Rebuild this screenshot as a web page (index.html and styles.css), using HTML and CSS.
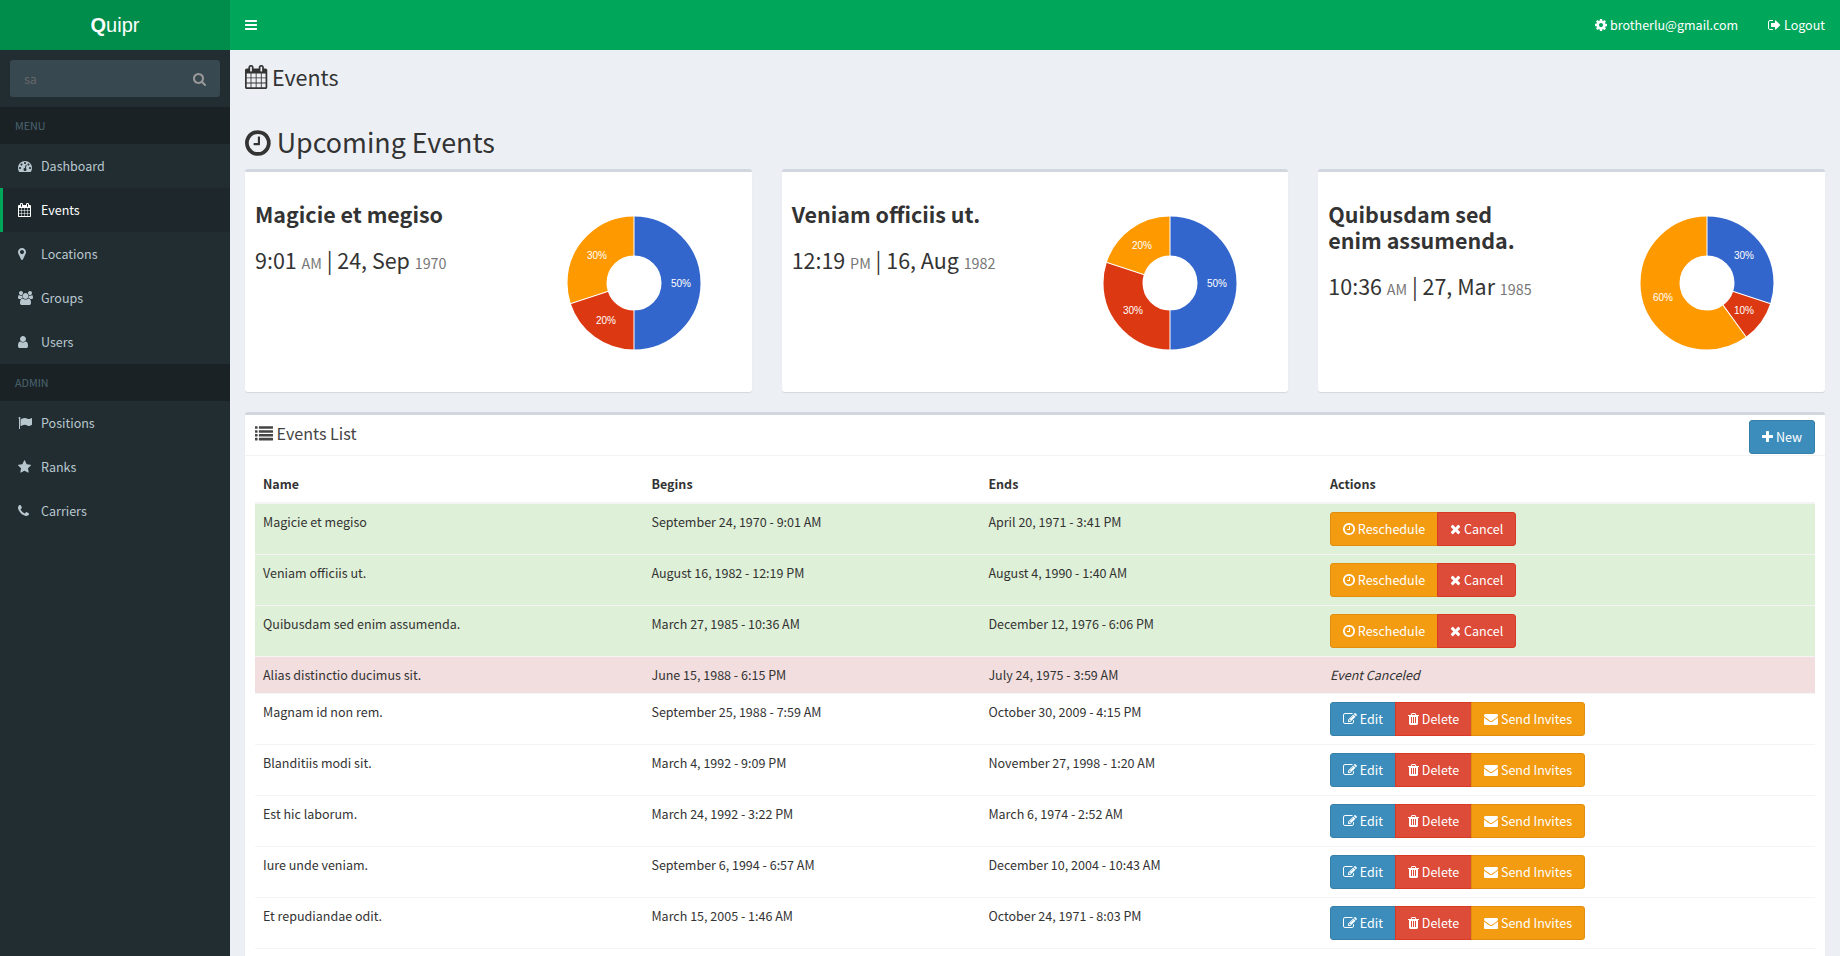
FILE: index.html
```html
<!DOCTYPE html>
<html lang="en">
<head>
<meta charset="utf-8">
<title>Quipr</title>
<link rel="stylesheet" href="styles.css">
</head>
<body>
<svg class="sprite" aria-hidden="true">
  <defs>
    <path id="i-bars" d="M1664 1344v128q0 26-19 45t-45 19h-1408q-26 0-45-19t-19-45v-128q0-26 19-45t45-19h1408q26 0 45 19t19 45zm0-512v128q0 26-19 45t-45 19h-1408q-26 0-45-19t-19-45v-128q0-26 19-45t45-19h1408q26 0 45 19t19 45zm0-512v128q0 26-19 45t-45 19h-1408q-26 0-45-19t-19-45v-128q0-26 19-45t45-19h1408q26 0 45 19t19 45z"/>
    <path id="i-calendar" d="M192 1664h288v-288h-288v288zm352 0h320v-288h-320v288zm-352-352h288v-320h-288v320zm352 0h320v-320h-320v320zm-352-384h288v-288h-288v288zm736 736h320v-288h-320v288zm-384-736h320v-288h-320v288zm768 736h288v-288h-288v288zm-384-352h320v-320h-320v320zm-352-864v-288q0-13-9.5-22.5t-22.5-9.5h-64q-13 0-22.5 9.5t-9.5 22.5v288q0 13 9.5 22.5t22.5 9.5h64q13 0 22.5-9.5t9.5-22.5zm736 864h288v-320h-288v320zm-384-384h320v-288h-320v288zm384 0h288v-288h-288v288zm32-480v-288q0-13-9.5-22.5t-22.5-9.5h-64q-13 0-22.5 9.5t-9.5 22.5v288q0 13 9.5 22.5t22.5 9.5h64q13 0 22.5-9.5t9.5-22.5zm384-64v1280q0 52-38 90t-90 38h-1408q-52 0-90-38t-38-90v-1280q0-52 38-90t90-38h128v-96q0-66 47-113t113-47h64q66 0 113 47t47 113v96h384v-96q0-66 47-113t113-47h64q66 0 113 47t47 113v96h128q52 0 90 38t38 90z"/>
    <path id="i-clock" d="M1024 544v448q0 14-9 23t-23 9h-320q-14 0-23-9t-9-23v-64q0-14 9-23t23-9h224v-352q0-14 9-23t23-9h64q14 0 23 9t9 23zm416 352q0-148-73-273t-198-198-273-73-273 73-198 198-73 273 73 273 198 198 273 73 273-73 198-198 73-273zm224 0q0 209-103 385.5t-279.5 279.5-385.5 103-385.5-103-279.5-279.5-103-385.5 103-385.5 279.5-279.5 385.5-103 385.5 103 279.5 279.5 103 385.5z"/>
    <path id="i-search" d="M1216 832q0-185-131.5-316.5t-316.5-131.5-316.5 131.5-131.5 316.5 131.5 316.5 316.5 131.5 316.5-131.5 131.5-316.5zm512 832q0 52-38 90t-90 38q-54 0-90-38l-343-342q-179 124-399 124-143 0-273.5-55.5t-225-150-150-225-55.5-273.5 55.5-273.5 150-225 225-150 273.5-55.5 273.5 55.5 225 150 150 225 55.5 273.5q0 220-124 399l343 343q37 37 37 90z"/>
    <path id="i-dashboard" d="M384 1152q0-53-37.5-90.5t-90.5-37.5-90.5 37.5-37.5 90.5 37.5 90.5 90.5 37.5 90.5-37.5 37.5-90.5zm192-448q0-53-37.5-90.5t-90.5-37.5-90.5 37.5-37.5 90.5 37.5 90.5 90.5 37.5 90.5-37.5 37.5-90.5zm428 481l101-382q6-26-7.5-48.5t-38.5-29.5-48 6.5-30 39.5l-101 382q-60 5-107 43.5t-63 98.5q-20 77 20 146t117 89 146-20 89-117q16-60-6-117t-72-91zm660-33q0-53-37.5-90.5t-90.5-37.5-90.5 37.5-37.5 90.5 37.5 90.5 90.5 37.5 90.5-37.5 37.5-90.5zm-640-640q0-53-37.5-90.5t-90.5-37.5-90.5 37.5-37.5 90.5 37.5 90.5 90.5 37.5 90.5-37.5 37.5-90.5zm448 192q0-53-37.5-90.5t-90.5-37.5-90.5 37.5-37.5 90.5 37.5 90.5 90.5 37.5 90.5-37.5 37.5-90.5zm320 448q0 261-141 483-19 29-54 29h-1402q-35 0-54-29-141-221-141-483 0-182 71-348t191-286 286-191 348-71 348 71 286 191 191 286 71 348z"/>
    <path id="i-marker" d="M1152 640q0-106-75-181t-181-75-181 75-75 181 75 181 181 75 181-75 75-181zm256 0q0 109-33 179l-364 774q-16 33-47.5 52t-67.5 19-67.5-19-46.5-52l-365-774q-33-70-33-179 0-212 150-362t362-150 362 150 150 362z"/>
    <path id="i-users" d="M529 896q-162 5-265 128h-134q-82 0-138-40.5t-56-118.5q0-353 124-353 6 0 43.5 21t97.5 42.5 119 21.5q67 0 133-23-5 37-5 66 0 139 81 256zm1071 637q0 120-73 189.5t-194 69.5h-874q-121 0-194-69.5t-73-189.5q0-53 3.5-103.5t14-109 26.5-108.5 43-97.5 62-81 85.5-53.5 111.5-20q10 0 43 21.5t73 48 107 48 135 21.5 135-21.5 107-48 73-48 43-21.5q61 0 111.5 20t85.5 53.5 62 81 43 97.5 26.5 108.5 14 109 3.5 103.5zm-1024-1277q0 106-75 181t-181 75-181-75-75-181 75-181 181-75 181 75 75 181zm704 384q0 159-112.5 271.5t-271.5 112.5-271.5-112.5-112.5-271.5 112.5-271.5 271.5-112.5 271.5 112.5 112.5 271.5zm576 225q0 78-56 118.5t-138 40.5h-134q-103-123-265-128 81-117 81-256 0-29-5-66 66 23 133 23 59 0 119-21.5t97.5-42.5 43.5-21q124 0 124 353zm-128-609q0 106-75 181t-181 75-181-75-75-181 75-181 181-75 181 75 75 181z"/>
    <path id="i-user" d="M1536 1399q0 109-62.5 187t-150.5 78h-854q-88 0-150.5-78t-62.5-187q0-85 8.5-160.5t31.5-152 58.5-131 94-89 134.5-34.5q131 128 313 128t313-128q76 0 134.5 34.5t94 89 58.5 131 31.5 152 8.5 160.5zm-256-887q0 159-112.5 271.5t-271.5 112.5-271.5-112.5-112.5-271.5 112.5-271.5 271.5-112.5 271.5 112.5 112.5 271.5z"/>
    <path id="i-flag" d="M320 256q0 72-64 110v1266q0 13-9.5 22.5t-22.5 9.5h-64q-13 0-22.5-9.5t-9.5-22.5v-1266q-64-38-64-110 0-53 37.5-90.5t90.5-37.5 90.5 37.5 37.5 90.5zm1472 64v763q0 25-12.5 38.5t-39.5 27.5q-215 116-369 116-61 0-123.5-22t-108.5-48-115.5-48-142.5-22q-192 0-464 146-17 9-33 9-26 0-45-19t-19-45v-742q0-32 31-55 21-14 79-43 236-120 421-120 107 0 200 29t219 88q38 19 88 19 54 0 117.5-21t110-47 88-47 54.5-21q26 0 45 19t19 45z"/>
    <path id="i-star" d="M1728 647q0 22-26 48l-363 354 86 500q1 7 1 20 0 21-10.5 35.5t-30.5 14.5q-19 0-40-12l-449-236-449 236q-22 12-40 12-21 0-31.5-14.5t-10.5-35.5q0-6 2-20l86-500-364-354q-25-27-25-48 0-37 56-46l502-73 225-455q19-41 49-41t49 41l225 455 502 73q56 9 56 46z"/>
    <path id="i-phone" d="M1600 1240q0 27-10 70.5t-21 68.5q-21 50-122 106-94 51-186 51-27 0-53-3.5t-57.5-12.5-47-14.5-55.5-20.5-49-18q-98-35-175-83-127-79-264-216t-216-264q-48-77-83-175-3-9-18-49t-20.5-55.5-14.5-47-12.5-57.5-3.5-53q0-92 51-186 56-101 106-122 25-11 68.5-21t70.5-10q14 0 21 3 18 6 53 76 11 19 30 54t35 63.5 31 53.5q3 4 17.5 25t21.5 35.5 7 28.5q0 20-28.5 50t-62 55-62 53-28.5 46q0 9 5 22.5t8.5 20.5 14 24 11.5 19q76 137 174 235t235 174q2 1 19 11.5t24 14 20.5 8.5 22.5 5q18 0 46-28.5t53-62 55-62 50-28.5q14 0 28.5 7t35.5 21.5 25 17.5q25 15 53.5 31t63.5 35 54 30q70 35 76 53 3 7 3 21z"/>
    <path id="i-cog" d="M1152 896q0-106-75-181t-181-75-181 75-75 181 75 181 181 75 181-75 75-181zm512-109v222q0 12-8 23t-20 13l-185 28q-19 54-39 91 35 50 107 138 10 12 10 25t-9 23q-27 37-99 108t-94 71q-12 0-26-9l-138-108q-44 23-91 38-16 136-29 186-7 28-36 28h-222q-14 0-24.5-8.5t-11.5-21.5l-28-184q-49-16-90-37l-141 107q-10 9-25 9-14 0-25-11-126-114-165-168-7-10-7-23 0-12 8-23 15-21 51-66.5t54-70.5q-27-50-41-99l-183-27q-13-2-21-12.5t-8-23.5v-222q0-12 8-23t19-13l186-28q14-46 39-92-40-57-107-138-10-12-10-24 0-10 9-23 26-36 98.5-107.5t94.5-71.5q13 0 26 10l138 107q44-23 91-38 16-136 29-186 7-28 36-28h222q14 0 24.5 8.5t11.5 21.5l28 184q49 16 90 37l142-107q9-9 24-9 13 0 25 10 129 119 165 170 7 8 7 22 0 12-8 23-15 21-51 66.5t-54 70.5q26 50 41 98l183 28q13 2 21 12.5t8 23.5z"/>
    <path id="i-signout" d="M704 1440q0 4 1 20t.5 26.5-3 23.5-10 19.5-20.5 6.5h-320q-119 0-203.5-84.5t-84.5-203.5v-704q0-119 84.5-203.5t203.5-84.5h320q13 0 22.5 9.5t9.5 22.5q0 4 1 20t.5 26.5-3 23.5-10 19.5-20.5 6.5h-320q-66 0-113 47t-47 113v704q0 66 47 113t113 47h312l11.5 1 11.5 3 8 5.5 7 9 2 13.5zm928-544q0 26-19 45l-544 544q-19 19-45 19t-45-19-19-45v-288h-448q-26 0-45-19t-19-45v-384q0-26 19-45t45-19h448v-288q0-26 19-45t45-19 45 19l544 544q19 19 19 45z"/>
    <path id="i-list" d="M32 128h192l32 32v192l-32 32h-192l-32-32v-192zM416 128h1344l32 32v192l-32 32h-1344l-32-32v-192zM32 512h192l32 32v192l-32 32h-192l-32-32v-192zM416 512h1344l32 32v192l-32 32h-1344l-32-32v-192zM32 896h192l32 32v192l-32 32h-192l-32-32v-192zM416 896h1344l32 32v192l-32 32h-1344l-32-32v-192zM32 1280h192l32 32v192l-32 32h-192l-32-32v-192zM416 1280h1344l32 32v192l-32 32h-1344l-32-32v-192z"/>
    <path id="i-plus" d="M1600 736v192q0 40-28 68t-68 28h-416v416q0 40-28 68t-68 28h-192q-40 0-68-28t-28-68v-416h-416q-40 0-68-28t-28-68v-192q0-40 28-68t68-28h416v-416q0-40 28-68t68-28h192q40 0 68 28t28 68v416h416q40 0 68 28t28 68z"/>
    <path id="i-times" d="M1490 1322q0 40-28 68l-136 136q-28 28-68 28t-68-28l-294-294-294 294q-28 28-68 28t-68-28l-136-136q-28-28-28-68t28-68l294-294-294-294q-28-28-28-68t28-68l136-136q28-28 68-28t68 28l294 294 294-294q28-28 68-28t68 28l136 136q28 28 28 68t-28 68l-294 294 294 294q28 28 28 68z"/>
    <path id="i-edit" d="M888 1184l116-116-152-152-116 116v56h96v96h56zm440-720q-16-16-33 1l-350 350q-17 17-1 33t33-1l350-350q17-17 1-33zm80 594v190q0 119-84.5 203.5t-203.5 84.5h-832q-119 0-203.5-84.5t-84.5-203.5v-832q0-119 84.5-203.5t203.5-84.5h832q63 0 117 25 15 7 18 23 3 17-9 29l-49 49q-14 14-32 8-23-6-45-6h-832q-66 0-113 47t-47 113v832q0 66 47 113t113 47h832q66 0 113-47t47-113v-126q0-13 9-22l64-64q15-15 35-7t20 29zm-96-738l288 288-672 672h-288v-288zm444 132l-92 92-288-288 92-92q28-28 68-28t68 28l152 152q28 28 28 68t-28 68z"/>
    <path id="i-trash" d="M704 1376v-704q0-14-9-23t-23-9h-64q-14 0-23 9t-9 23v704q0 14 9 23t23 9h64q14 0 23-9t9-23zm256 0v-704q0-14-9-23t-23-9h-64q-14 0-23 9t-9 23v704q0 14 9 23t23 9h64q14 0 23-9t9-23zm256 0v-704q0-14-9-23t-23-9h-64q-14 0-23 9t-9 23v704q0 14 9 23t23 9h64q14 0 23-9t9-23zm-544-992h448l-48-117q-7-9-17-11h-317q-10 2-17 11zm928 32v64q0 14-9 23t-23 9h-96v948q0 83-47 143.5t-113 60.5h-832q-66 0-113-58.5t-47-141.5v-952h-96q-14 0-23-9t-9-23v-64q0-14 9-23t23-9h309l70-167q15-37 54-63t79-26h320q40 0 79 26t54 63l70 167h309q14 0 23 9t9 23z"/>
    <path id="i-envelope" d="M1792 710v794q0 66-47 113t-113 47h-1472q-66 0-113-47t-47-113v-794q44 49 101 87 362 246 497 345 57 42 92.5 65.5t94.5 48 110 24.5h2q51 0 110-24.5t94.5-48 92.5-65.5q170-123 498-345 57-39 100-87zm0-294q0 79-49 151t-122 123q-376 261-468 325-10 7-42.5 31t-54 38.5-52 32.5-57.5 27-50 9h-2q-23 0-50-9t-57.5-27-52-32.5-54-38.5-42.5-31q-91-64-262-182.5t-205-142.5q-62-42-117-115.5t-55-136.5q0-78 41.5-130t118.5-52h1472q65 0 112.5 47t47.5 113z"/>
  </defs>
</svg>

<div class="app">
  <header class="topbar">
    <a class="logo" href="#"><b>Q</b>uipr</a>
    <nav class="topnav" aria-label="Account">
      <button class="toggle" type="button" aria-label="Toggle navigation"><svg class="icon" viewBox="128 0 1536 1792"><use href="#i-bars"/></svg></button>
      <div class="account">
        <a href="#"><svg class="icon" viewBox="128 0 1536 1792"><use href="#i-cog"/></svg> brotherlu@gmail.com</a>
        <a href="#"><svg class="icon" viewBox="64 0 1664 1792"><use href="#i-signout"/></svg> Logout</a>
      </div>
    </nav>
  </header>

  <aside class="sidebar">
    <form class="search">
      <input type="text" value="sa" aria-label="Search">
      <button type="button" aria-label="Search"><svg class="icon" viewBox="64 0 1664 1792"><use href="#i-search"/></svg></button>
    </form>
    <nav aria-label="Main">
      <h2 class="menu-title">MENU</h2>
      <ul class="menu">
        <li><a href="#"><svg class="icon" preserveAspectRatio="xMinYMid" viewBox="0 0 1792 1792"><use href="#i-dashboard"/></svg>Dashboard</a></li>
        <li><a class="active" href="#" aria-current="page"><svg class="icon" preserveAspectRatio="xMinYMid" viewBox="64 0 1664 1792"><use href="#i-calendar"/></svg>Events</a></li>
        <li><a href="#"><svg class="icon" preserveAspectRatio="xMinYMid" viewBox="384 0 1024 1792"><use href="#i-marker"/></svg>Locations</a></li>
        <li><a href="#"><svg class="icon" preserveAspectRatio="xMinYMid" viewBox="-64 0 1920 1792"><use href="#i-users"/></svg>Groups</a></li>
        <li><a href="#"><svg class="icon" preserveAspectRatio="xMinYMid" viewBox="256 0 1280 1792"><use href="#i-user"/></svg>Users</a></li>
      </ul>
      <h2 class="menu-title">ADMIN</h2>
      <ul class="menu">
        <li><a href="#"><svg class="icon" preserveAspectRatio="xMinYMid" viewBox="0 0 1792 1792"><use href="#i-flag"/></svg>Positions</a></li>
        <li><a href="#"><svg class="icon" preserveAspectRatio="xMinYMid" viewBox="64 0 1664 1792"><use href="#i-star"/></svg>Ranks</a></li>
        <li><a href="#"><svg class="icon" preserveAspectRatio="xMinYMid" viewBox="192 0 1408 1792"><use href="#i-phone"/></svg>Carriers</a></li>
      </ul>
    </nav>
  </aside>

  <main class="content">
    <h1 class="page-title"><svg class="icon" viewBox="64 0 1664 1792"><use href="#i-calendar"/></svg> Events</h1>
    <h2 class="section-title"><svg class="icon" viewBox="128 0 1536 1792"><use href="#i-clock"/></svg> Upcoming Events</h2>

    <section class="cards">
      <article class="box card">
        <div>
          <h3>Magicie et megiso</h3>
          <p class="when">9:01 <small>AM</small> | 24, Sep <small>1970</small></p>
        </div>
        <svg class="chart" viewBox="-109 -101 217 200" role="img" aria-label="50%, 20%, 30%">
          <g class="ring">
            <circle r="47" pathLength="100" class="blue" stroke-dasharray="50 50"/>
            <circle r="47" pathLength="100" class="red" stroke-dasharray="20 80" stroke-dashoffset="-50"/>
            <circle r="47" pathLength="100" class="orange" stroke-dasharray="30 70" stroke-dashoffset="-70"/>
          </g>
          <path class="cut" d="M0-27V-67"/><path class="cut" d="M0-27V-67" transform="rotate(180)"/><path class="cut" d="M0-27V-67" transform="rotate(252)"/>
          <text x="47" y="4">50%</text><text x="-28" y="41">20%</text><text x="-37" y="-24">30%</text>
        </svg>
      </article>
      <article class="box card">
        <div>
          <h3>Veniam officiis ut.</h3>
          <p class="when">12:19 <small>PM</small> | 16, Aug <small>1982</small></p>
        </div>
        <svg class="chart" viewBox="-109 -101 217 200" role="img" aria-label="50%, 30%, 20%">
          <g class="ring">
            <circle r="47" pathLength="100" class="blue" stroke-dasharray="50 50"/>
            <circle r="47" pathLength="100" class="red" stroke-dasharray="30 70" stroke-dashoffset="-50"/>
            <circle r="47" pathLength="100" class="orange" stroke-dasharray="20 80" stroke-dashoffset="-80"/>
          </g>
          <path class="cut" d="M0-27V-67"/><path class="cut" d="M0-27V-67" transform="rotate(180)"/><path class="cut" d="M0-27V-67" transform="rotate(288)"/>
          <text x="47" y="4">50%</text><text x="-37" y="31">30%</text><text x="-28" y="-34">20%</text>
        </svg>
      </article>
      <article class="box card">
        <div>
          <h3>Quibusdam sed enim assumenda.</h3>
          <p class="when">10:36 <small>AM</small> | 27, Mar <small>1985</small></p>
        </div>
        <svg class="chart" viewBox="-109 -101 217 200" role="img" aria-label="30%, 10%, 60%">
          <g class="ring">
            <circle r="47" pathLength="100" class="blue" stroke-dasharray="30 70"/>
            <circle r="47" pathLength="100" class="red" stroke-dasharray="10 90" stroke-dashoffset="-30"/>
            <circle r="47" pathLength="100" class="orange" stroke-dasharray="60 40" stroke-dashoffset="-40"/>
          </g>
          <path class="cut" d="M0-27V-67"/><path class="cut" d="M0-27V-67" transform="rotate(108)"/><path class="cut" d="M0-27V-67" transform="rotate(144)"/>
          <text x="37" y="-24">30%</text><text x="37" y="31">10%</text><text x="-44" y="18">60%</text>
        </svg>
      </article>
    </section>

    <section class="box">
      <header class="box-header">
        <h3><svg class="icon" viewBox="0 0 1792 1792"><use href="#i-list"/></svg> Events List</h3>
        <button class="btn primary" type="button"><svg class="icon" viewBox="192 0 1408 1792"><use href="#i-plus"/></svg> New</button>
      </header>
      <div class="box-body">
        <table class="events">
          <colgroup><col class="c-name"><col class="c-begins"><col class="c-ends"><col></colgroup>
          <thead><tr><th>Name</th><th>Begins</th><th>Ends</th><th>Actions</th></tr></thead>
          <tbody>
            <tr class="success"><td>Magicie et megiso</td><td>September 24, 1970 - 9:01 AM</td><td>April 20, 1971 - 3:41 PM</td><td><div class="group"><button class="btn warning" type="button"><svg class="icon" viewBox="128 0 1536 1792"><use href="#i-clock"/></svg> Reschedule</button><button class="btn danger" type="button"><svg class="icon" viewBox="192 0 1408 1792"><use href="#i-times"/></svg> Cancel</button></div></td></tr>
            <tr class="success"><td>Veniam officiis ut.</td><td>August 16, 1982 - 12:19 PM</td><td>August 4, 1990 - 1:40 AM</td><td><div class="group"><button class="btn warning" type="button"><svg class="icon" viewBox="128 0 1536 1792"><use href="#i-clock"/></svg> Reschedule</button><button class="btn danger" type="button"><svg class="icon" viewBox="192 0 1408 1792"><use href="#i-times"/></svg> Cancel</button></div></td></tr>
            <tr class="success"><td>Quibusdam sed enim assumenda.</td><td>March 27, 1985 - 10:36 AM</td><td>December 12, 1976 - 6:06 PM</td><td><div class="group"><button class="btn warning" type="button"><svg class="icon" viewBox="128 0 1536 1792"><use href="#i-clock"/></svg> Reschedule</button><button class="btn danger" type="button"><svg class="icon" viewBox="192 0 1408 1792"><use href="#i-times"/></svg> Cancel</button></div></td></tr>
            <tr class="canceled"><td>Alias distinctio ducimus sit.</td><td>June 15, 1988 - 6:15 PM</td><td>July 24, 1975 - 3:59 AM</td><td><em>Event Canceled</em></td></tr>
            <tr><td>Magnam id non rem.</td><td>September 25, 1988 - 7:59 AM</td><td>October 30, 2009 - 4:15 PM</td><td><div class="group"><button class="btn primary" type="button"><svg class="icon" viewBox="0 0 1792 1792"><use href="#i-edit"/></svg> Edit</button><button class="btn danger" type="button"><svg class="icon" viewBox="192 0 1408 1792"><use href="#i-trash"/></svg> Delete</button><button class="btn warning" type="button"><svg class="icon" viewBox="0 0 1792 1792"><use href="#i-envelope"/></svg> Send Invites</button></div></td></tr>
            <tr><td>Blanditiis modi sit.</td><td>March 4, 1992 - 9:09 PM</td><td>November 27, 1998 - 1:20 AM</td><td><div class="group"><button class="btn primary" type="button"><svg class="icon" viewBox="0 0 1792 1792"><use href="#i-edit"/></svg> Edit</button><button class="btn danger" type="button"><svg class="icon" viewBox="192 0 1408 1792"><use href="#i-trash"/></svg> Delete</button><button class="btn warning" type="button"><svg class="icon" viewBox="0 0 1792 1792"><use href="#i-envelope"/></svg> Send Invites</button></div></td></tr>
            <tr><td>Est hic laborum.</td><td>March 24, 1992 - 3:22 PM</td><td>March 6, 1974 - 2:52 AM</td><td><div class="group"><button class="btn primary" type="button"><svg class="icon" viewBox="0 0 1792 1792"><use href="#i-edit"/></svg> Edit</button><button class="btn danger" type="button"><svg class="icon" viewBox="192 0 1408 1792"><use href="#i-trash"/></svg> Delete</button><button class="btn warning" type="button"><svg class="icon" viewBox="0 0 1792 1792"><use href="#i-envelope"/></svg> Send Invites</button></div></td></tr>
            <tr><td>Iure unde veniam.</td><td>September 6, 1994 - 6:57 AM</td><td>December 10, 2004 - 10:43 AM</td><td><div class="group"><button class="btn primary" type="button"><svg class="icon" viewBox="0 0 1792 1792"><use href="#i-edit"/></svg> Edit</button><button class="btn danger" type="button"><svg class="icon" viewBox="192 0 1408 1792"><use href="#i-trash"/></svg> Delete</button><button class="btn warning" type="button"><svg class="icon" viewBox="0 0 1792 1792"><use href="#i-envelope"/></svg> Send Invites</button></div></td></tr>
            <tr><td>Et repudiandae odit.</td><td>March 15, 2005 - 1:46 AM</td><td>October 24, 1971 - 8:03 PM</td><td><div class="group"><button class="btn primary" type="button"><svg class="icon" viewBox="0 0 1792 1792"><use href="#i-edit"/></svg> Edit</button><button class="btn danger" type="button"><svg class="icon" viewBox="192 0 1408 1792"><use href="#i-trash"/></svg> Delete</button><button class="btn warning" type="button"><svg class="icon" viewBox="0 0 1792 1792"><use href="#i-envelope"/></svg> Send Invites</button></div></td></tr>
          </tbody>
        </table>
      </div>
    </section>
  </main>
</div>
</body>
</html>
```
FILE: styles.css
```css
*, *::before, *::after { box-sizing: border-box; }

body {
  margin: 0;
  font-family: "Source Sans Pro", "Noto Sans CJK SC", "Open Sans", sans-serif;
  font-size: 14px;
  font-size-adjust: 0.486;
  line-height: 20px;
  color: #333;
  background: #ecf0f5;
}

h1, h2, h3, p, ul { margin: 0; padding: 0; font-weight: 400; }
ul { list-style: none; }
a { color: inherit; text-decoration: none; }
button, input { font: inherit; color: inherit; margin: 0; }
button { cursor: pointer; }

.sprite { display: none; }
.icon { height: 1em; width: auto; vertical-align: -0.143em; fill: currentColor; overflow: visible; }

/* Shell */
.app {
  display: grid;
  grid-template: 50px 1fr / 230px 1fr;
  height: 100vh;
}

.topbar {
  grid-column: 1 / -1;
  display: grid;
  grid-template-columns: subgrid;
  color: #fff;
}
.logo {
  background: #008d4c;
  font-family: "Liberation Sans", Arial, sans-serif;
  font-size: 20px;
  font-size-adjust: none;
  line-height: 50px;
  text-align: center;
}
.topnav {
  display: flex;
  justify-content: space-between;
  background: #00a65a;
}
.toggle { border: 0; background: none; padding: 15px; line-height: 20px; }
.account { display: flex; }
.account a { padding: 15px; }

/* Sidebar */
.sidebar { background: #222d32; color: #b8c7ce; }
.search {
  display: flex;
  margin: 10px;
  height: 37px;
  border-radius: 3px;
  background: #374850;
}
.search input {
  flex: 1;
  min-width: 0;
  border: 0;
  padding: 6px 14px;
  background: none;
  color: #666;
}
.search button { border: 0; background: none; padding: 6px 14px; color: #999; }

.menu-title {
  padding: 10px 15px;
  height: 37px;
  font-size: 12px;
  line-height: 17px;
  background: #1a2226;
  color: #4b646f;
}
.menu a {
  display: flex;
  align-items: center;
  gap: 3px;
  height: 44px;
  padding: 0 15px;
  border-left: 3px solid transparent;
}
.menu .icon { width: 20px; flex: none; }
.menu .active { border-left-color: #00a65a; background: #1e282c; color: #fff; }

/* Content */
.content { padding: 15px; overflow-y: auto; scrollbar-width: none; }
.page-title { font-size: 24px; line-height: 24px; }
.section-title { margin: 36px 0 11px; font-size: 30px; line-height: 33px; }

.box {
  margin-bottom: 20px;
  border-top: 3px solid #d2d6de;
  border-radius: 3px;
  background: #fff;
  box-shadow: 0 1px 1px rgba(0, 0, 0, 0.1);
}

.cards { display: grid; grid-template-columns: repeat(3, 1fr); gap: 30px; }
.card { display: grid; grid-template-columns: 1fr 217px; gap: 48px; padding: 10px; }
.card h3, .when { font-size: 24px; line-height: 26px; }
.card h3 { margin: 19px 0 20px; font-weight: 700; }
.when { white-space: nowrap; }
.when small { font-size: 16px; color: #777; }

.chart { display: block; width: 217px; height: 200px; }
.chart text {
  font-family: "Liberation Sans", Arial, sans-serif;
  font-size: 10px;
  font-size-adjust: none;
  text-anchor: middle;
  fill: #fff;
}
.ring { fill: none; stroke-width: 39px; transform: rotate(-90deg); }
.blue { stroke: #36c; }
.red { stroke: #dc3912; }
.orange { stroke: #f90; }
.cut { stroke: #fff; stroke-width: 1px; }

.box-header {
  display: flex;
  justify-content: space-between;
  align-items: flex-start;
  height: 41px;
  padding: 5px 10px 0;
  border-bottom: 1px solid #f4f4f4;
}
.box-header h3 { margin-top: 3px; font-size: 18px; line-height: 20px; color: #444; }
.box-body { padding: 10px; }

/* Table */
.events { width: 100%; table-layout: fixed; border-collapse: separate; border-spacing: 0; }
.c-name { width: 24.9%; }
.c-begins { width: 21.6%; }
.c-ends { width: 21.9%; }
.events th, .events td { padding: 8px; text-align: left; vertical-align: top; }
.events th { border-bottom: 2px solid #f4f4f4; font-weight: 700; }
.events tr + tr td { border-top: 1px solid #f4f4f4; }
.events tr:last-child td { border-bottom: 1px solid #f4f4f4; }
.success td { background: #dff0d8; }
.canceled td { background: #f2dede; }

/* Buttons */
.btn {
  height: 34px;
  padding: 6px 12px;
  border: 1px solid;
  border-radius: 3px;
  line-height: 20px;
  white-space: nowrap;
  color: #fff;
}
.primary { background: #3c8dbc; border-color: #367fa9; }
.danger { background: #dd4b39; border-color: #d73925; }
.warning { background: #f39c12; border-color: #e08e0b; }
.group { display: flex; }
.group .btn + .btn { margin-left: -1px; border-top-left-radius: 0; border-bottom-left-radius: 0; }
.group .btn:not(:last-child) { border-top-right-radius: 0; border-bottom-right-radius: 0; }
```
